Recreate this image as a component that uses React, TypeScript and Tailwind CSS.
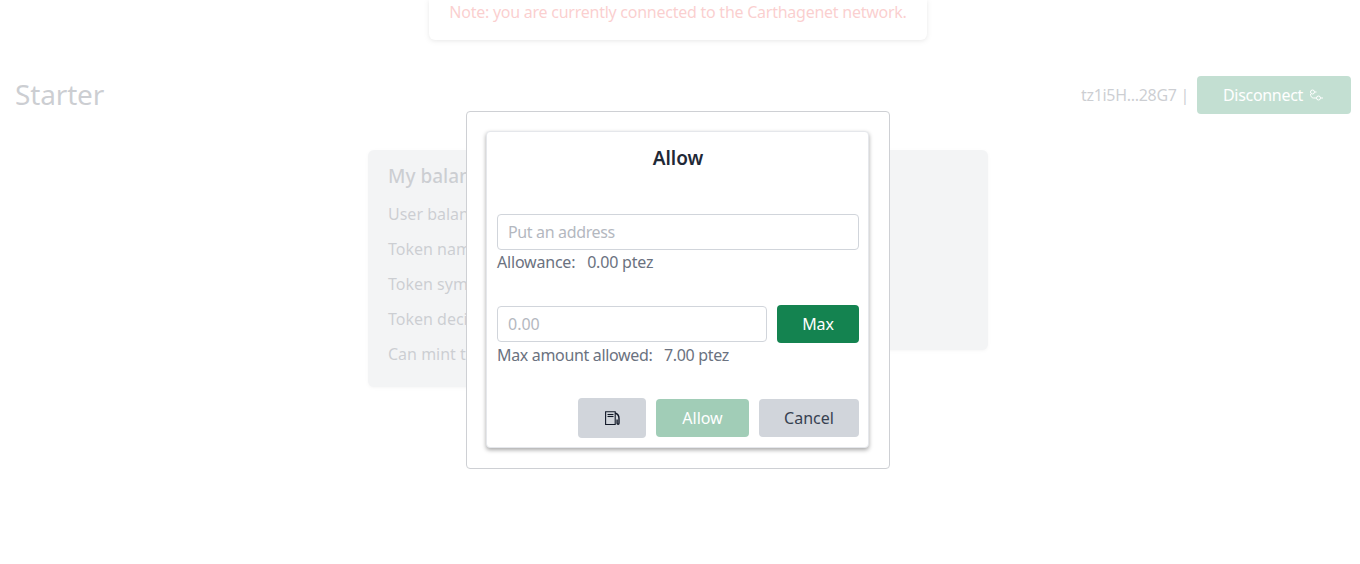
const font = { fontFamily: '"Noto Sans", sans-serif' };

function PumpIcon() {
  return (
    <svg width="15" height="15" viewBox="0 0 15 15" fill="none" stroke="#111827" strokeWidth="1.1">
      <path d="M0.6 13.5V0.8h9.6v12.7z" />
      <path d="M2.5 3.5h6" />
      <path d="M2.5 5.5h6" />
      <path d="M10.2 2c2.6 1 3.8 3 3.8 5.5v4.8c0 1.2-1.7 1.2-1.9 0V8.5" strokeWidth="1.4" />
    </svg>
  );
}

function UnlinkIcon() {
  return (
    <svg width="14" height="14" viewBox="0 0 14 14" fill="none" stroke="#fff" strokeWidth="1">
      <circle cx="3.5" cy="4" r="2" />
      <circle cx="9.5" cy="10" r="2" />
      <path d="M5.5 4h2M11.5 10h2.5M1.5 6c0 2 1 4 3 4h3" />
    </svg>
  );
}

function Row({ children }: { children: string }) {
  return <p className="text-base leading-6 text-[#374151] whitespace-nowrap">{children}</p>;
}

export default function App() {
  return (
    <div className="relative w-[1356px] h-[564px] overflow-hidden bg-white" style={font}>
      <div className="opacity-25">
        <div className="mx-auto w-[498px] h-[40px] rounded-b-md bg-white shadow-[0_1px_4px_rgba(0,0,0,0.35)] flex items-start justify-center">
          <p className="text-[16px] leading-6 text-[#ef4444] whitespace-nowrap tracking-[-0.25px]">
            Note: you are currently connected to the Carthagenet network.
          </p>
        </div>
        <header className="mt-[36px] h-[38px] pl-[15px] pr-[5px] flex items-center justify-between">
          <h1 className="pb-[2px] text-[28px] leading-[36px] text-[#374151] tracking-[-0.15px]">Starter</h1>
          <div className="flex items-center gap-[8px]">
            <span className="text-base text-[#374151] tracking-[-0.3px]">tz1i5H...28G7 |</span>
            <button className="w-[154px] h-[38px] pr-[2px] rounded bg-[#148350] text-white text-base tracking-[-0.3px] flex items-center justify-center gap-[6px]">
              Disconnect <UnlinkIcon />
            </button>
          </div>
        </header>
        <main className="mt-[36px] mx-auto w-[620px] flex items-start">
          <section className="w-[310px] h-[237px] rounded-l-md bg-[#d1d5db] shadow-sm pl-[20px] pt-[12px]">
            <h2 className="text-[19px] leading-[28px] font-medium text-[#374151] mb-[12px]">My balance</h2>
            <div className="flex flex-col gap-[11px]">
              <Row>User balance:</Row>
              <Row>Token name:</Row>
              <Row>Token symbol:</Row>
              <Row>Token decimals:</Row>
              <Row>Can mint tokens:</Row>
            </div>
          </section>
          <section className="w-[310px] h-[200px] rounded-r-md bg-[#d1d5db] shadow-sm" />
        </main>
      </div>

      <div className="absolute left-[466px] top-[111px] w-[424px] h-[358px] rounded border border-[#ced0d4] bg-white pt-[19px] pl-[19px] pr-[20px]">
        <div className="h-[317px] rounded border border-[#e5e7eb] bg-white shadow-[0_2px_4px_rgba(0,0,0,0.35)] pl-[10px] pr-[9px] flex flex-col">
          <h2 className="mt-[12px] text-center text-[19px] leading-[28px] font-semibold text-[#1f2937]">Allow</h2>
          <input
            placeholder="Put an address"
            className="mt-[42px] w-[362px] h-[36px] rounded border border-[#d1d5db] px-[10px] text-base text-[#374151] placeholder:text-[#b4b8bf] outline-none tracking-[-0.35px]"
          />
          <p className="text-base leading-6 text-[#6b7280] tracking-[-0.2px] whitespace-pre">Allowance:   0.00 ptez</p>
          <div className="mt-[31px] flex items-center gap-[10px]">
            <input
              placeholder="0.00"
              className="w-[270px] h-[36px] rounded border border-[#d1d5db] px-[10px] text-base text-[#374151] placeholder:text-[#b4b8bf] outline-none"
            />
            <button className="w-[82px] h-[38px] rounded bg-[#148350] text-white text-base tracking-[-0.2px]">Max</button>
          </div>
          <p className="text-base leading-6 text-[#6b7280] tracking-[-0.33px] whitespace-pre">Max amount allowed:   7.00 ptez</p>
          <div className="mt-[31px] flex items-center justify-end gap-[10px]">
            <button className="w-[68px] h-[40px] rounded bg-[#d1d5db] flex items-center justify-center">
              <PumpIcon />
            </button>
            <button className="w-[93px] h-[38px] rounded bg-[#a1cdb7] text-white text-base">Allow</button>
            <button className="w-[100px] h-[38px] rounded bg-[#d1d5db] text-[#374151] text-base">Cancel</button>
          </div>
        </div>
      </div>
    </div>
  );
}
